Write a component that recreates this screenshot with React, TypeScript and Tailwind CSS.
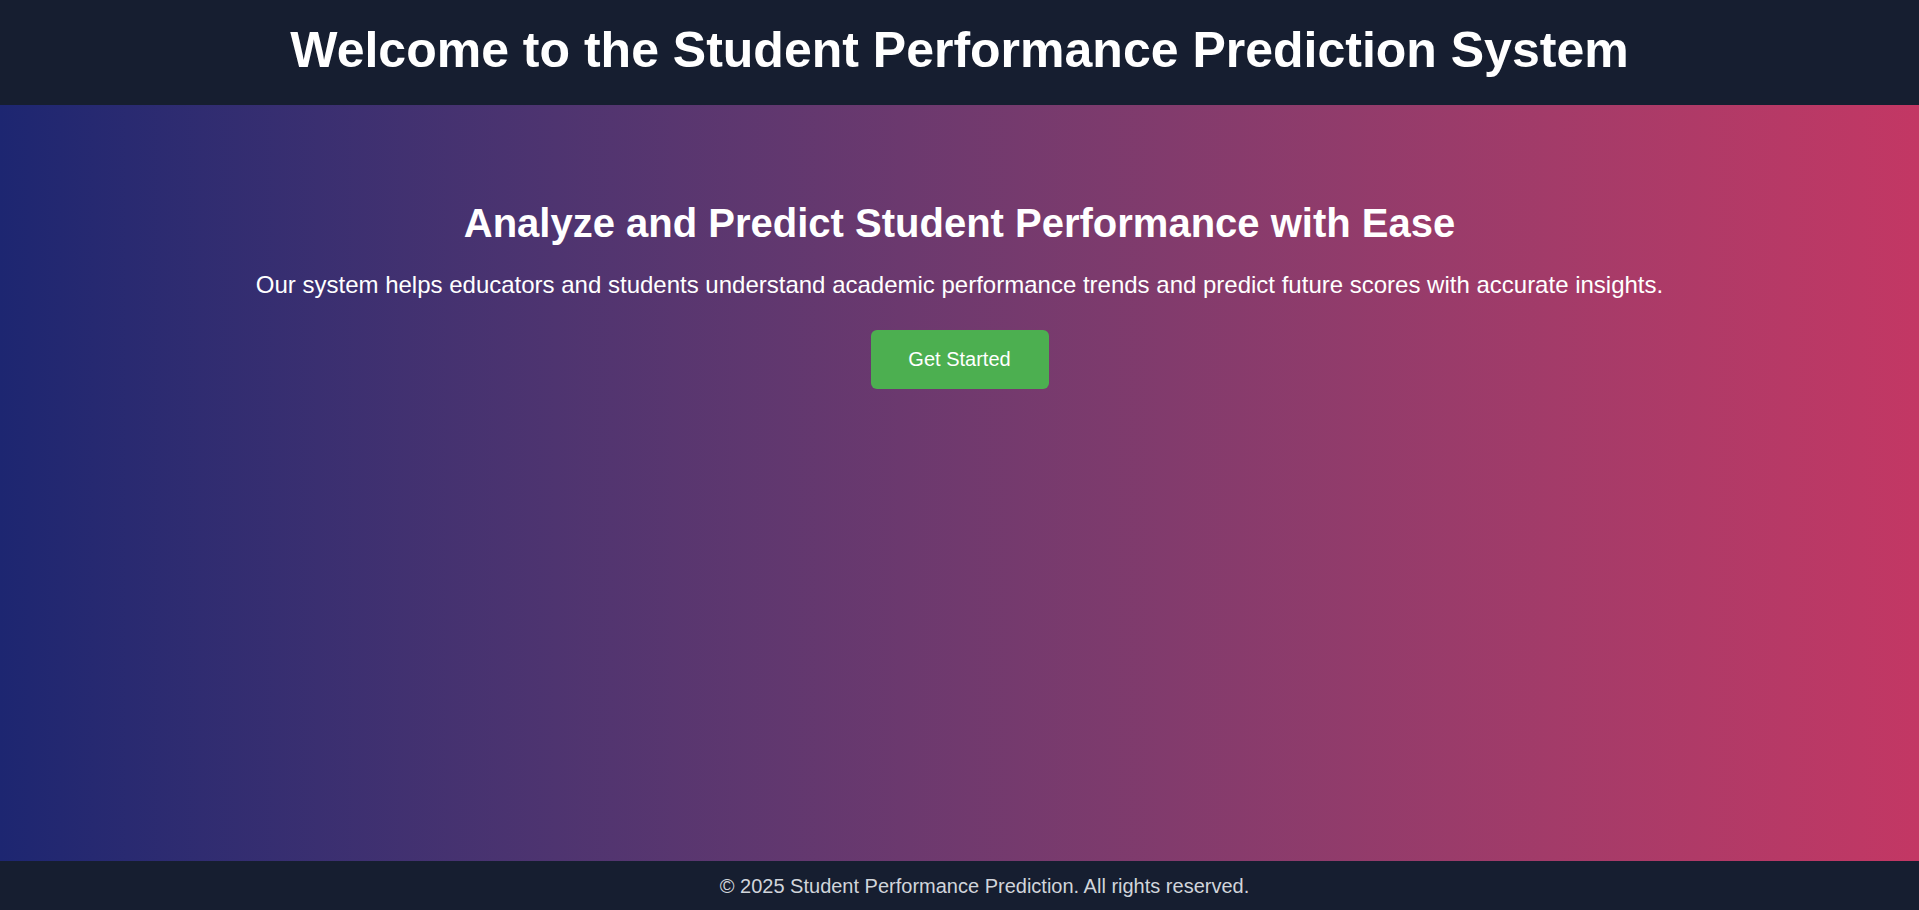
export default function App() {
  return (
    <div className="flex h-screen flex-col font-['Liberation_Sans',Arial,sans-serif] text-white">
      <header className="flex h-[105px] shrink-0 justify-center bg-[#161e30] pt-[22px]">
        <h1 className="text-[50px] font-bold leading-[1.15]">
          Welcome to the Student Performance Prediction System
        </h1>
      </header>

      <main className="flex flex-1 flex-col items-center bg-gradient-to-r from-[#1d2671] to-[#c33764] pt-[95px] text-center">
        <h2 className="text-[40px] font-bold leading-[1.15]">
          Analyze and Predict Student Performance with Ease
        </h2>
        <p className="mt-[25px] text-[24px] leading-[1.15]">
          Our system helps educators and students understand academic performance trends and predict future scores with accurate insights.
        </p>
        <button className="mt-[31px] h-[59px] w-[178px] rounded-[6px] bg-[#4caf50] text-[20px] text-white">
          Get Started
        </button>
      </main>

      <footer className="flex h-[49px] shrink-0 items-center justify-center bg-[#161e30] pl-[50px] text-[20px] text-[#d1d5db]">
        © 2025 Student Performance Prediction. All rights reserved.
      </footer>
    </div>
  );
}
